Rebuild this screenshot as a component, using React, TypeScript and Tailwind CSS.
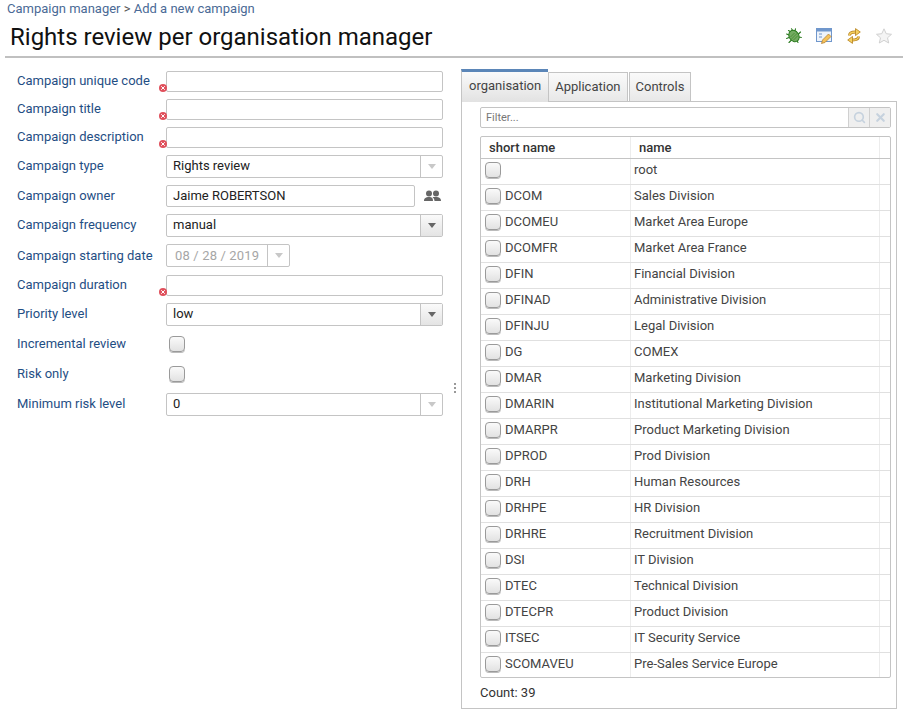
import React from 'react';
import { Search, X } from 'lucide-react';

const rows = [
  ['', 'root'],
  ['DCOM', 'Sales Division'],
  ['DCOMEU', 'Market Area Europe'],
  ['DCOMFR', 'Market Area France'],
  ['DFIN', 'Financial Division'],
  ['DFINAD', 'Administrative Division'],
  ['DFINJU', 'Legal Division'],
  ['DG', 'COMEX'],
  ['DMAR', 'Marketing Division'],
  ['DMARIN', 'Institutional Marketing Division'],
  ['DMARPR', 'Product Marketing Division'],
  ['DPROD', 'Prod Division'],
  ['DRH', 'Human Resources'],
  ['DRHPE', 'HR Division'],
  ['DRHRE', 'Recruitment Division'],
  ['DSI', 'IT Division'],
  ['DTEC', 'Technical Division'],
  ['DTECPR', 'Product Division'],
  ['ITSEC', 'IT Security Service'],
  ['SCOMAVEU', 'Pre-Sales Service Europe'],
];

const Caret = ({ active }: { active?: boolean }) => (
  <svg width="8" height="5" viewBox="0 0 8 5">
    <path d="M0 0h8L4 5z" fill={active ? '#666666' : '#c8c8c8'} />
  </svg>
);

const Checkbox = () => (
  <span className="block shrink-0 w-4 h-4 rounded-[4px] border border-[#9a9a9a] bg-gradient-to-b from-[#fafafa] to-[#e2e2e2] shadow-[0_1px_0_#bbbbbb]" />
);

const ErrorMark = () => (
  <span className="absolute left-[-8px] top-[12px] w-[8px] h-[8px] rounded-full bg-[#e0505c] flex items-center justify-center">
    <X size={6} strokeWidth={4} color="#ffffff" />
  </span>
);

const TextRow = ({ label }: { label: string }) => (
  <div className="flex">
    <div className="w-[166px] shrink-0 pl-[17px] text-[#1f4e84] text-[13px] leading-[20px]">{label}</div>
    <div className="relative w-[277px] h-[21px] border border-[#c4c4c4] rounded-[2px] bg-white">
      <ErrorMark />
    </div>
  </div>
);

const SelectRow = ({ label, value, active }: { label: string; value: string; active?: boolean }) => (
  <div className="flex">
    <div className="w-[166px] shrink-0 pl-[17px] pt-px text-[#1f4e84] text-[13px] leading-[20px]">{label}</div>
    <div className="flex w-[277px] h-[23px] border border-[#c4c4c4] rounded-[2px] bg-white">
      <div className="flex-1 pl-[6px] text-[13px] leading-[20px] text-[#222222]">{value}</div>
      <div className={`w-[22px] flex items-center justify-center border-l border-[#c4c4c4] ${active ? 'bg-gradient-to-b from-[#fafafa] to-[#e4e4e4]' : ''}`}>
        <Caret active={active} />
      </div>
    </div>
  </div>
);

const CheckRow = ({ label }: { label: string }) => (
  <div className="flex items-center h-[16px]">
    <div className="w-[169px] shrink-0 pl-[17px] text-[#1f4e84] text-[13px] leading-[16px]">{label}</div>
    <Checkbox />
  </div>
);

const Tab = ({ children, active }: { children: React.ReactNode; active?: boolean }) => (
  <div
    className={
      active
        ? 'h-[33px] px-[7px] border-t-[3px] border-t-[#5b86b8] border-l border-l-[#c4c4c4] bg-gradient-to-b from-[#fafafa] to-[#e2e2e2] text-[13px] leading-[28px] text-[#444444] relative'
        : 'h-[30px] mt-[3px] px-[6px] border border-[#c4c4c4] bg-gradient-to-b from-[#fafafa] to-[#e8e8e8] text-[13px] leading-[28px] text-[#444444]'
    }
  >
    {children}
  </div>
);

export default function App() {
  return (
    <div className="w-[903px] h-[714px] overflow-hidden bg-white font-['Roboto',sans-serif]">
      {/* Header */}
      <div className="pl-[7px] pt-[1px] h-[18px] text-[13px] leading-[16px] text-[#4a6a96]">
        Campaign manager <span className="text-[#555555]">&gt;</span> Add a new campaign
      </div>
      <div className="ml-[5px] h-[40px] border-b-2 border-[#c0c0c0] pl-[5px] flex items-start justify-between">
        <div className="text-[24px] leading-[38px] text-[#111111]">Rights review per organisation manager</div>
        <div className="flex items-center gap-[14px] pt-[10px] pr-[11px]">
          <svg width="16" height="16" viewBox="0 0 16 16">
            <g stroke="#2a7a1e" strokeWidth="1.100" strokeLinecap="round">
              <path d="M2.500 2.500l2.500 1.500M.6 6l2.400 1M.6 10.500l2.400-1M3 14.500l2.500-2.500M9.500 .8l-.5 2.200M14.500 4l-2 2M15.400 9.500l-2.400-.5M12 14.500l-1.500-2.500M5.500 .8l1.500 2.200" />
            </g>
            <ellipse cx="8" cy="8" rx="4.800" ry="6" fill="#74ab62" stroke="#2a7a1e" transform="rotate(-35 8 8)" />
            <path d="M5 11.500l6.500-6.500M7.500 12l4.500-4.500M4.500 9l4-4" stroke="#44892f" strokeWidth="0.800" />
          </svg>
          <svg width="16" height="16" viewBox="0 0 16 16">
            <rect x="0.500" y="0.500" width="15" height="13" fill="#eef3fa" stroke="#7097cc" />
            <rect x="1" y="1" width="14" height="2.500" fill="#7097cc" />
            <path d="M3 6h3M3 9h3" stroke="#6c92c8" />
            <path d="M5.500 15.500l1-3.500 6-6 2.500 2.500-6 6z" fill="#f4c25a" stroke="#b0782a" strokeWidth="0.700" />
          </svg>
          <svg width="16" height="16" viewBox="0 0 16 16" fill="none">
            <path d="M3.500 7.500C3.500 5 6 4 9.500 4" stroke="#b57f1c" strokeWidth="2.800" />
            <path d="M3.500 7.500C3.500 5 6 4 9.500 4" stroke="#f5d060" strokeWidth="1.300" />
            <path d="M9.500 .6l4.800 3.400-4.800 3.600z" fill="#f5d060" stroke="#b57f1c" strokeWidth="0.800" strokeLinejoin="round" />
            <path d="M12.500 8.500C12.500 11 10 12 6.500 12" stroke="#b57f1c" strokeWidth="2.800" />
            <path d="M12.500 8.500C12.500 11 10 12 6.500 12" stroke="#f5d060" strokeWidth="1.300" />
            <path d="M6.500 8.400L1.700 12l4.800 3.400z" fill="#f5d060" stroke="#b57f1c" strokeWidth="0.800" strokeLinejoin="round" />
          </svg>
          <svg width="16" height="16" viewBox="0 0 16 16">
            <path d="M8 .8l2.200 4.900 5.300.6-4 3.500 1.200 5.200L8 12.300 3.300 15l1.200-5.200-4-3.500 5.300-.6z" fill="#f4f4f4" stroke="#d0d0d0" />
          </svg>
        </div>
      </div>

      <div className="flex">
        {/* Form */}
        <div className="relative w-[461px] shrink-0 pt-[13px] flex flex-col">
          <div className="flex flex-col gap-[7px]">
            <TextRow label="Campaign unique code" />
            <TextRow label="Campaign title" />
            <TextRow label="Campaign description" />
            <SelectRow label="Campaign type" value="Rights review" />
          </div>
          <div className="flex items-center mt-[7px]">
            <div className="w-[166px] shrink-0 pl-[17px] text-[#1f4e84] text-[13px] leading-[20px]">Campaign owner</div>
            <div className="w-[249px] h-[22px] border border-[#c4c4c4] rounded-[2px] pl-[6px] text-[13px] leading-[20px] text-[#222222]">
              Jaime ROBERTSON
            </div>
            <svg className="ml-[9px]" width="17" height="12" viewBox="0 0 17 12" fill="#666666">
              <circle cx="5" cy="3.500" r="3" />
              <circle cx="12" cy="3.500" r="3" />
              <path d="M0 11c0-3 2-4 5-4s4 1 4 4zM8.500 7.200C9 7 10.500 7 12 7c3 0 5 1 5 4h-6.500c0-1.500-.6-2.800-2-3.800z" />
            </svg>
          </div>
          <div className="mt-[7px]">
            <SelectRow label="Campaign frequency" value="manual" active />
          </div>
          <div className="flex items-center mt-[7px]">
            <div className="w-[166px] shrink-0 pl-[17px] text-[#1f4e84] text-[13px] leading-[20px]">Campaign starting date</div>
            <div className="flex w-[124px] h-[23px] border border-[#c4c4c4] rounded-[2px] bg-white">
              <div className="flex-1 pl-[8px] text-[13px] leading-[21px] tracking-[0.15px] text-[#a6a6a6]">08 / 28 / 2019</div>
              <div className="w-[22px] flex items-center justify-center border-l border-[#c4c4c4]">
                <Caret />
              </div>
            </div>
          </div>
          <div className="mt-[8px]">
            <TextRow label="Campaign duration" />
          </div>
          <div className="mt-[7px]">
            <SelectRow label="Priority level" value="low" active />
          </div>
          <div className="mt-[10px]">
            <CheckRow label="Incremental review" />
          </div>
          <div className="mt-[14px]">
            <CheckRow label="Risk only" />
          </div>
          <div className="mt-[11px]">
            <SelectRow label="Minimum risk level" value="0" />
          </div>
          {/* splitter grip */}
          <div className="absolute left-[454px] top-[325px] flex flex-col gap-[2px]">
            <span className="w-[2px] h-[2px] bg-[#999999]" />
            <span className="w-[2px] h-[2px] bg-[#999999]" />
            <span className="w-[2px] h-[2px] bg-[#999999]" />
          </div>
        </div>

        {/* Tabs */}
        <div className="w-[436px] pt-[11px]">
          <div className="flex h-[32px] items-start relative">
            <Tab active>organisation</Tab>
            <Tab>Application</Tab>
            <div className="w-px" />
            <Tab>Controls</Tab>
          </div>
          <div className="h-[608px] border border-[#c4c4c4] pl-[18px] pr-[5px] pt-[5px]">
            <div className="flex h-[21px] border border-[#c4c4c4] rounded-[2px]">
              <div className="flex-1 pl-[5px] text-[11px] leading-[19px] text-[#777777]">Filter...</div>
              <div className="w-[21px] flex items-center justify-center border-l border-[#d0d0d0] bg-[#efefef]">
                <Search size={13} strokeWidth={3} color="#c6d2de" />
              </div>
              <div className="w-[21px] flex items-center justify-center border-l border-[#d0d0d0] bg-[#efefef]">
                <X size={13} strokeWidth={4} color="#c6d2de" />
              </div>
            </div>
            <div className="mt-[8px] h-[542px] border border-[#c4c4c4] rounded-[2px] overflow-hidden">
              <div className="flex h-[22px] border-b border-[#c4c4c4] text-[13px] leading-[21px] font-medium text-[#333333]">
                <div className="w-[150px] pl-[8px] border-r border-[#ececec]">short name</div>
                <div className="w-[248px] pl-[8px]">name</div>
                <div className="flex-1 border-l border-[#ececec]" />
              </div>
              {rows.map(([code, name]) => (
                <div key={name} className="flex h-[26px] border-b border-[#e0e0e0] last:border-b-0 text-[13px] leading-[22px] text-[#444444]">
                  <div className="w-[150px] pl-[4px] pt-[3px] flex items-start gap-[4px] border-r border-[#ececec]">
                    <Checkbox />
                    <span className="-mt-[3px]">{code}</span>
                  </div>
                  <div className="w-[248px] pl-[3px]">{name}</div>
                  <div className="flex-1 border-l border-[#ececec]" />
                </div>
              ))}
            </div>
            <div className="mt-[7px] text-[13px] leading-[16px] text-[#333333]">Count: 39</div>
          </div>
        </div>
      </div>
    </div>
  );
}
